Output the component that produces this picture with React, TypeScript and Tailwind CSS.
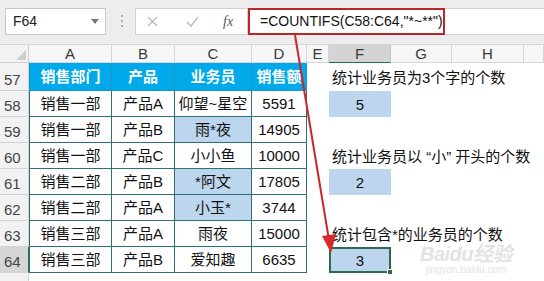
import React from "react";

const font = { fontFamily: '"Liberation Sans", "Noto Sans CJK SC", sans-serif' };

const cols = ["A", "B", "C", "D", "E", "F", "G", "H", ""];

const rows: { n: number; cells: string[]; hl?: boolean }[] = [
  { n: 57, cells: ["销售部门", "产品", "业务员", "销售额"] },
  { n: 58, cells: ["销售一部", "产品A", "仰望~星空", "5591"] },
  { n: 59, cells: ["销售一部", "产品B", "雨*夜", "14905"], hl: true },
  { n: 60, cells: ["销售一部", "产品C", "小小鱼", "10000"] },
  { n: 61, cells: ["销售二部", "产品B", "*阿文", "17805"], hl: true },
  { n: 62, cells: ["销售二部", "产品A", "小玉*", "3744"], hl: true },
  { n: 63, cells: ["销售三部", "产品A", "雨夜", "15000"] },
  { n: 64, cells: ["销售三部", "产品B", "爱知趣", "6635"] },
];

// text in column F, by row number
const side: Record<number, { text: string; value?: boolean; selected?: boolean }> = {
  57: { text: "统计业务员为3个字的个数" },
  58: { text: "5", value: true },
  60: { text: "统计业务员以 “小” 开头的个数" },
  61: { text: "2", value: true },
  63: { text: "统计包含*的业务员的个数" },
  64: { text: "3", value: true, selected: true },
};

function Toolbar() {
  return (
    <div className="flex h-[45px] items-start bg-[#ededed] pt-[8px] border-b border-[#d6d6d6]">
      <div className="ml-[5px] flex h-[27px] w-[101px] items-center justify-between border border-[#c9c9c9] bg-white pl-[7px] pr-[6px] text-[14px] text-[#222]">
        <span>F64</span>
        <svg width="8" height="5" viewBox="0 0 8 5">
          <path d="M0 0h8L4 5z" fill="#777" />
        </svg>
      </div>
      <div className="ml-[15px] mt-[7px] flex flex-col gap-[3px]">
        <span className="block h-[2px] w-[2px] bg-[#aaa]" />
        <span className="block h-[2px] w-[2px] bg-[#aaa]" />
        <span className="block h-[2px] w-[2px] bg-[#aaa]" />
      </div>
      <div className="ml-[12px] flex h-[27px] w-[113px] items-center border border-[#d0d0d0] bg-white">
        <svg className="ml-[11px]" width="11" height="11" viewBox="0 0 11 11">
          <path d="M1 1l9 9M10 1l-9 9" stroke="#bdbdbd" strokeWidth="1.4" />
        </svg>
        <svg className="ml-[28px]" width="13" height="11" viewBox="0 0 13 11">
          <path d="M1 6l4 4 7-9" stroke="#bdbdbd" strokeWidth="1.5" fill="none" />
        </svg>
        <span className="ml-[24px] text-[14px] italic text-[#555]" style={{ fontFamily: '"Liberation Serif", serif' }}>
          fx
        </span>
      </div>
      <div className="flex h-[27px] flex-1 items-center border-y border-[#d0d0d0] bg-white">
        <div className="flex h-[27px] w-[197px] items-center border-2 border-[#b8262b] pl-[10px] text-[14px] text-[#111]">
          =COUNTIFS(C58:C64,"*~**")
        </div>
      </div>
    </div>
  );
}

export default function App() {
  return (
    <div className="relative h-[281px] w-[544px] overflow-hidden bg-white" style={font}>
      <Toolbar />
      <div className="grid grid-cols-[29px_83px_63px_77px_55px_22px_62px_61px_72px_1fr] grid-rows-[18px_28px_26px_26px_26px_26px_26px_26px_26px_1fr] h-[236px]">
        {/* column header row */}
        <div className="relative border-r border-b border-[#cfcfcf] bg-[#f2f2f2]">
          <svg className="absolute right-[2px] bottom-[2px]" width="10" height="10" viewBox="0 0 10 10">
            <path d="M10 0v10H0z" fill="#cdcdcd" />
          </svg>
        </div>
        {cols.map((c, i) => (
          <div
            key={i}
            className={
              "flex items-center justify-center border-r border-b text-[15px] leading-none text-[#3a3a3a] " +
              (c === "F"
                ? "border-[#c6c6c6] border-b-[#217346] bg-[#d4d4d4]"
                : "border-[#d6d6d6] bg-[#f6f6f6]")
            }
          >
            {c}
          </div>
        ))}

        {rows.map((r, ri) => {
          const s = side[r.n];
          return (
            <React.Fragment key={r.n}>
              <div
                className={
                  "flex items-end pb-[3px] pl-[4px] text-[15px] leading-none text-[#444] border-r border-b border-[#d3d3d3] " +
                  (r.n === 64 ? "bg-[#d6d6d6] border-r-[#217346] text-[#333]" : "bg-[#f2f2f2]")
                }
              >
                {r.n}
              </div>
              {r.cells.map((t, ci) => (
                <div
                  key={ci}
                  className={
                    "flex items-center justify-center whitespace-nowrap border-r border-b leading-none " +
                    (ci === 0 ? "border-l " : "") +
                    (ri === 0
                      ? "border-[#1a94c4] bg-[#00a9ea] text-[15px] font-bold text-white"
                      : "border-[#2f6f78] text-[15px] text-[#111] " +
                        (ci === 2 && r.hl ? "bg-[#bcd6ee]" : "bg-white"))
                  }
                >
                  {t}
                </div>
              ))}
              <div />
              <div
                className={
                  "relative flex items-center whitespace-nowrap text-[15px] leading-none text-[#111] " +
                  (s?.value ? "justify-center bg-[#bdd5ee] " : "pl-[3px] ") +
                  (s?.selected ? "border-2 border-[#2e6b4d]" : "")
                }
              >
                {s?.text}
                {s?.selected && (
                  <span className="absolute right-[-4px] bottom-[-4px] h-[6px] w-[6px] border border-white bg-[#2e6b4d]" />
                )}
              </div>
              <div />
              <div />
              <div />
            </React.Fragment>
          );
        })}
        <div className="border-r border-[#d3d3d3] bg-[#f2f2f2]" />
      </div>

      {/* watermark */}
      <div className="pointer-events-none absolute left-[420px] top-[244px] flex flex-col items-center text-[#e3e3e3]">
        <span className="text-[20px] font-bold italic leading-none tracking-tight">Baidu经验</span>
        <span className="text-[10px] leading-tight">jingyan.baidu.com</span>
      </div>

      {/* arrow */}
      <svg className="pointer-events-none absolute left-0 top-0" width="544" height="281" viewBox="0 0 544 281">
        <line x1="295" y1="35" x2="329" y2="240" stroke="#c8282c" strokeWidth="2" />
        <path d="M331 253 L322 236 L336 234 Z" fill="#d82a2a" />
      </svg>
    </div>
  );
}
